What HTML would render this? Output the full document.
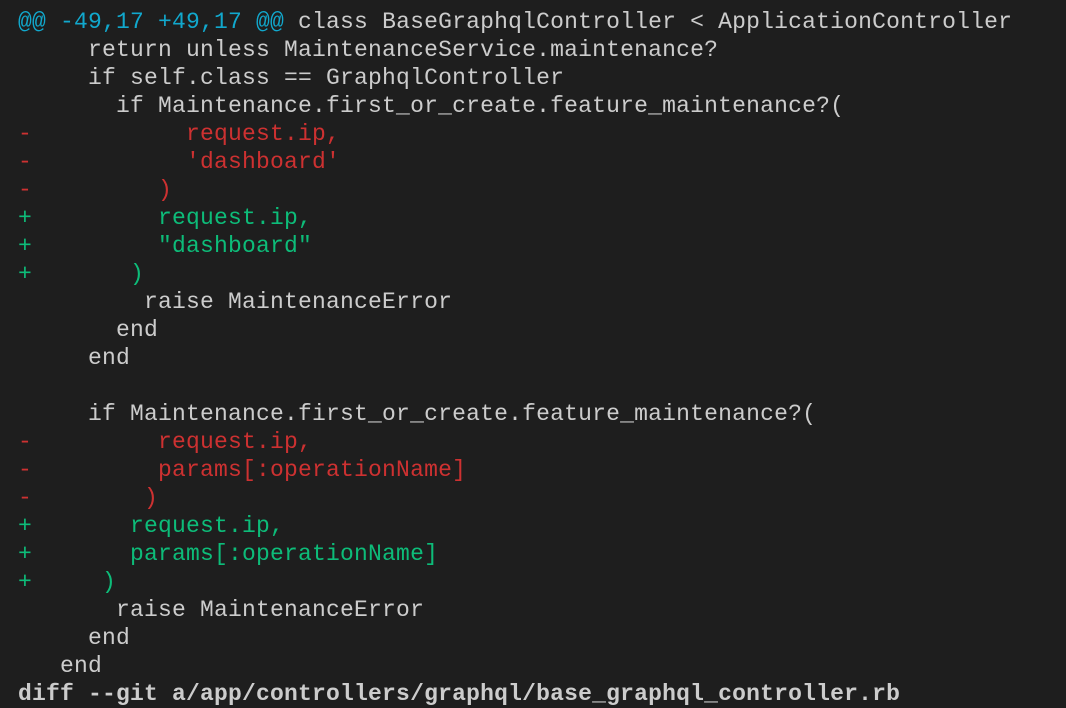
<!DOCTYPE html>
<html><head><meta charset="utf-8"><style>
html,body{margin:0;padding:0;background:#1e1e1e;width:1066px;height:686px;overflow:hidden}
pre{margin:0;position:absolute;left:18px;top:8px;font-family:"Liberation Mono",monospace;font-size:23px;letter-spacing:0.2px;line-height:28px;color:#cccccc;white-space:pre}
.c{color:#11a8cd}.r{color:#cd3131}.g{color:#0dbc79}
</style></head><body><pre><span class="c">@@ -49,17 +49,17 @@</span> class BaseGraphqlController &lt; ApplicationController
     return unless MaintenanceService.maintenance?
     if self.class == GraphqlController
       if Maintenance.first_or_create.feature_maintenance?(
<span class="r">-           request.ip,</span>
<span class="r">-           'dashboard'</span>
<span class="r">-         )</span>
<span class="g">+         request.ip,</span>
<span class="g">+         "dashboard"</span>
<span class="g">+       )</span>
         raise MaintenanceError
       end
     end

     if Maintenance.first_or_create.feature_maintenance?(
<span class="r">-         request.ip,</span>
<span class="r">-         params[:operationName]</span>
<span class="r">-        )</span>
<span class="g">+       request.ip,</span>
<span class="g">+       params[:operationName]</span>
<span class="g">+     )</span>
       raise MaintenanceError
     end
   end
<b>diff --git a/app/controllers/graphql/base_graphql_controller.rb</b></pre></body></html>
